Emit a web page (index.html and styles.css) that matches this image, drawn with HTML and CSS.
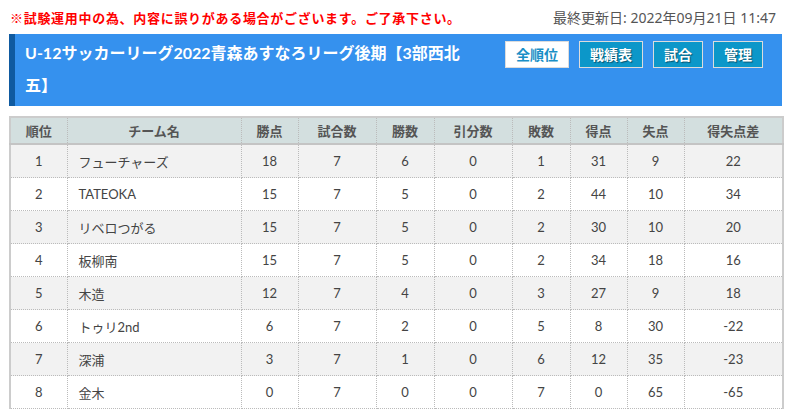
FILE: index.html
```html
<!DOCTYPE html>
<html lang="ja">
<head>
<meta charset="utf-8">
<title>順位表</title>
<link rel="stylesheet" href="styles.css">
</head>
<body>
<div class="page">
  <div class="topbar">
    <p class="notice">※試験運用中の為、内容に誤りがある場合がございます。ご了承下さい。</p>
    <p class="updated">最終更新日: 2022年09月21日 11:47</p>
  </div>
  <div class="head">
    <h1 class="title">U-12サッカーリーグ2022青森あすなろリーグ後期【3部西北五】</h1>
    <div class="btns">
      <a class="btn active">全順位</a>
      <a class="btn">戦績表</a>
      <a class="btn">試合</a>
      <a class="btn">管理</a>
    </div>
  </div>
  <table class="rank">
    <colgroup>
      <col class="c57"><col class="c174"><col class="c57"><col class="c78"><col class="c58"><col class="c78"><col class="c58"><col class="c57"><col class="c57"><col class="c99">
    </colgroup>
    <thead>
      <tr><th>順位</th><th>チーム名</th><th>勝点</th><th>試合数</th><th>勝数</th><th>引分数</th><th>敗数</th><th>得点</th><th>失点</th><th>得失点差</th></tr>
    </thead>
    <tbody>
      <tr><td>1</td><td class="team">フューチャーズ</td><td>18</td><td>7</td><td>6</td><td>0</td><td>1</td><td>31</td><td>9</td><td>22</td></tr>
      <tr><td>2</td><td class="team">TATEOKA</td><td>15</td><td>7</td><td>5</td><td>0</td><td>2</td><td>44</td><td>10</td><td>34</td></tr>
      <tr><td>3</td><td class="team">リベロつがる</td><td>15</td><td>7</td><td>5</td><td>0</td><td>2</td><td>30</td><td>10</td><td>20</td></tr>
      <tr><td>4</td><td class="team">板柳南</td><td>15</td><td>7</td><td>5</td><td>0</td><td>2</td><td>34</td><td>18</td><td>16</td></tr>
      <tr><td>5</td><td class="team">木造</td><td>12</td><td>7</td><td>4</td><td>0</td><td>3</td><td>27</td><td>9</td><td>18</td></tr>
      <tr><td>6</td><td class="team">トゥリ2nd</td><td>6</td><td>7</td><td>2</td><td>0</td><td>5</td><td>8</td><td>30</td><td>-22</td></tr>
      <tr><td>7</td><td class="team">深浦</td><td>3</td><td>7</td><td>1</td><td>0</td><td>6</td><td>12</td><td>35</td><td>-23</td></tr>
      <tr><td>8</td><td class="team">金木</td><td>0</td><td>7</td><td>0</td><td>0</td><td>7</td><td>0</td><td>65</td><td>-65</td></tr>
    </tbody>
  </table>
</div>
</body>
</html>
```
FILE: styles.css
```css
html, body {
  margin: 0;
  padding: 0;
  background: #fff;
}
body {
  font-family: Lato, "Noto Sans CJK JP", sans-serif;
  color: #444;
}
.page {
  width: 773px;
  padding: 8px 0 0 9px;
}
.topbar {
  display: flex;
  justify-content: space-between;
  align-items: center;
  height: 20px;
  padding-right: 6px;
}
.topbar p {
  margin: 0;
  line-height: 20px;
}
.notice {
  color: #f00;
  font-size: 13px;
  font-weight: bold;
  letter-spacing: 0.7px;
  padding-left: 1px;
}
.updated {
  color: #555;
  font-size: 14px;
  font-family: "Noto Sans", "Noto Sans CJK JP", sans-serif;
}
.head {
  margin-top: 6px;
  display: flex;
  align-items: flex-start;
  background: #3591ee;
  border-left: 6px solid #0f5aa0;
  padding: 3px 19px 5px 10px;
  height: 64px;
}
.title {
  flex: 1;
  margin: 0 34px 0 0;
  color: #fff;
  font-size: 16px;
  font-weight: bold;
  line-height: 32px;
}
.btns {
  display: flex;
  gap: 10px;
  margin-top: 4px;
}
.btn {
  display: block;
  height: 25px;
  line-height: 25px;
  padding: 0 10px;
  border: 1px solid #dcdcdc;
  background: #0c97c9;
  color: #fff;
  font-size: 14px;
  font-weight: bold;
  text-shadow: 1px 1px 1px rgba(0, 0, 0, 0.45);
  cursor: pointer;
}
.btn.active {
  background: #fff;
  color: #1a8fc6;
  text-shadow: none;
}
.rank {
  margin-top: 10px;
  width: 773px;
  table-layout: fixed;
  border-collapse: collapse;
  border-top: 2px solid #ccc;
  border-left: 2px solid #ccc;
  border-right: 2px solid #ccc;
  font-size: 13px;
}
.c57 { width: 57px; }
.c58 { width: 58px; }
.c78 { width: 78px; }
.c99 { width: 99px; }
.c174 { width: 174px; }
.rank th {
  background: #d3dfdf;
  color: #555;
  font-weight: bold;
  height: 25px;
  padding: 0;
  border-left: 1px dotted #bbb;
  border-right: 1px dotted #bbb;
  border-bottom: 2px solid #c4c4c4;
}
.rank td {
  height: 32px;
  padding: 0;
  text-align: center;
  border: 1px dotted #bbb;
  color: #444;
}
.rank td.team {
  text-align: left;
  padding-left: 11px;
}
.rank tbody tr:nth-child(odd) td {
  background: #f2f2f2;
}
```
